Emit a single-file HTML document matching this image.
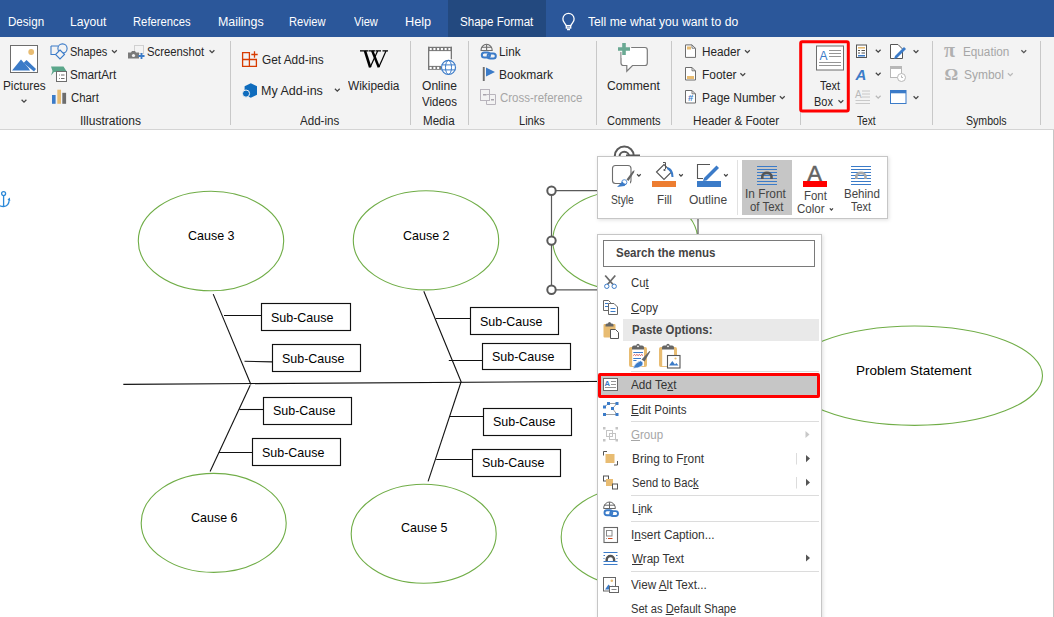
<!DOCTYPE html>
<html><head><meta charset="utf-8">
<style>
html,body{margin:0;padding:0;}
body{width:1054px;height:617px;overflow:hidden;position:relative;background:#fff;font-family:"Liberation Sans",sans-serif;}
.t{position:absolute;white-space:pre;transform-origin:0 0;}
.t u{text-decoration:underline;text-underline-offset:1px;text-decoration-thickness:1px;}
.a{position:absolute;}
.layer{position:absolute;left:0;top:0;}
.sep{position:absolute;width:1px;top:41px;height:84px;background:#c8c8c8;}
.msep{position:absolute;left:631px;width:188px;height:1px;background:#dcdcdc;}
</style></head>
<body>
<div class="a" style="left:0;top:0;width:1054px;height:37px;background:#2b579a;z-index:0"></div>
<div class="a" style="left:448px;top:0;width:98px;height:37px;background:#23497f;z-index:0"></div>
<div class="a" style="left:0;top:37px;width:1054px;height:92px;background:#f3f3f3;border-bottom:1px solid #d4d4d4;z-index:0"></div>
<div class="a" style="left:1053px;top:130px;width:1px;height:487px;background:#c6c6c6;z-index:0"></div>
<div class="sep" style="left:230px"></div>
<div class="sep" style="left:410px"></div>
<div class="sep" style="left:468px"></div>
<div class="sep" style="left:596px"></div>
<div class="sep" style="left:671px"></div>
<div class="sep" style="left:800px;top:112px;height:13px"></div>
<div class="sep" style="left:932px"></div>
<div class="sep" style="left:1040px"></div>
<svg class="layer" width="1054" height="617" style="z-index:1"><g fill="none" stroke="#fff" stroke-width="1.3"><path d="M566.3 25.6 L564.3 22.6 A5.6 5.6 0 1 1 572.7 22.6 L570.7 25.6 Z"/><rect x="566.3" y="25.6" width="4.4" height="2.4"/><path d="M567 29.6 H570"/></g><rect x="10.5" y="45.5" width="27" height="27" fill="#fff" stroke="#6d6d6d" stroke-width="1"/><path d="M12 70.5 L21 59.5 L28.5 68 L30 70.5 Z" fill="#3b7bc8"/><path d="M23.5 63 L26.5 60 L36 69 L34 71.5 Z" fill="#3b7bc8"/><circle cx="31.2" cy="52" r="2.9" fill="#e8bc72"/><path d="M21.6 99.8 L24 102.2 L26.4 99.8" fill="none" stroke="#444" stroke-width="1.25"/><g fill="none" stroke="#3b7bc8" stroke-width="1.1"><path d="M51 46 H58 M51 46 V54.5 H55"/><circle cx="62.5" cy="48.5" r="4.6"/><path d="M60 50 L64.5 54.5 L60 59 L55.5 54.5 Z" fill="#f3f3f3"/></g><path d="M112.0 50.3 L114.4 52.7 L116.80000000000001 50.3" fill="none" stroke="#444" stroke-width="1.25"/><path d="M51 66.5 H63.5 L67 72 H54 L51 75.5 L52.5 71 Z" fill="#5aa68a"/><rect x="56.5" y="71.5" width="10" height="10" fill="#fff" stroke="#6d6d6d"/><path d="M59 75 H59.8 M61 75 H64.5 M59 78.5 H59.8 M61 78.5 H64.5" stroke="#6d6d6d" stroke-width="1"/><rect x="52" y="95" width="3.6" height="8.8" fill="#3b7bc8"/><rect x="57.3" y="89.7" width="3.7" height="14.1" fill="#e8bc72"/><rect x="62.3" y="92.8" width="3.8" height="11" fill="#6d6d6d"/><rect x="134.5" y="45.5" width="9" height="8" fill="none" stroke="#9a9a9a" stroke-width="0.8" stroke-dasharray="1 1"/><path d="M128 52.5 H131 L132 51 H135 L136 52.5 H139 V58.5 H128 Z" fill="#7a7a7a"/><circle cx="133.5" cy="55.5" r="1.6" fill="#f3f3f3"/><path d="M141.5 53 V59 M138.5 56 H144.5" stroke="#3b7bc8" stroke-width="1.8"/><path d="M209.6 50.3 L212 52.7 L214.4 50.3" fill="none" stroke="#444" stroke-width="1.25"/><g fill="none" stroke="#d83b01" stroke-width="1.3"><path d="M242.6 52.6 H249.4 V66.4 H242.6 Z M242.6 59.5 H256.4 V66.4 H249.4"/><path d="M254.5 51.3 V57.7 M251.3 54.5 H257.7"/></g><path d="M250.8 83.2 L257 86.2 V94.8 L250.8 97.8 L244.6 94.8 V86.2 Z" fill="#0f6cbd"/><circle cx="246" cy="93.6" r="3.6" fill="#0f6cbd" stroke="#f3f3f3" stroke-width="1"/><path d="M334.90000000000003 88.8 L337.3 91.2 L339.7 88.8" fill="none" stroke="#444" stroke-width="1.25"/><g stroke="#000" fill="none"><path d="M365 50.8 L370.2 67.3" stroke-width="2.6"/><path d="M370.2 67.3 L377.6 51" stroke-width="1.2"/><path d="M372.2 50.8 L378.8 67.3" stroke-width="2.4"/><path d="M378.8 67.3 L386 51" stroke-width="1.2"/><path d="M360 50.8 H368 M368.5 50.8 H375.5 M376 50.8 H381 M382.5 50.8 H388" stroke-width="1.3"/></g><rect x="428.5" y="50" width="23" height="17" fill="#fff"/><rect x="428" y="46.8" width="24" height="4.3" fill="#777"/><rect x="429.60" y="48" width="2.1" height="2.1" fill="#fff"/><rect x="433.35" y="48" width="2.1" height="2.1" fill="#fff"/><rect x="437.10" y="48" width="2.1" height="2.1" fill="#fff"/><rect x="440.85" y="48" width="2.1" height="2.1" fill="#fff"/><rect x="444.60" y="48" width="2.1" height="2.1" fill="#fff"/><rect x="448.35" y="48" width="2.1" height="2.1" fill="#fff"/><rect x="428" y="46.8" width="1.3" height="23" fill="#777"/><rect x="450.7" y="46.8" width="1.3" height="12.5" fill="#777"/><rect x="428" y="65.9" width="13" height="3.9" fill="#777"/><rect x="429.60" y="66.9" width="2.1" height="2.1" fill="#fff"/><rect x="433.35" y="66.9" width="2.1" height="2.1" fill="#fff"/><rect x="437.10" y="66.9" width="2.1" height="2.1" fill="#fff"/><circle cx="448.5" cy="67.4" r="7" fill="#fff" stroke="#3b7bc8" stroke-width="1.2"/><g stroke="#3b7bc8" stroke-width="1" fill="none"><ellipse cx="448.5" cy="67.4" rx="3" ry="7"/><path d="M441.5 64.9 H455.5 M441.5 69.9 H455.5"/></g><g fill="none" stroke="#6d6d6d" stroke-width="1.1"><path d="M481 50.5 A5.6 6.2 0 0 1 492.2 50.5 Z"/><path d="M481.5 47.2 H491.7 M486.6 44.5 V50.5"/></g><g fill="none" stroke="#3b7bc8" stroke-width="2"><rect x="481.8" y="52.6" width="8.2" height="5" rx="2.5"/><rect x="487.6" y="53.6" width="8.2" height="5" rx="2.5"/></g><rect x="482.8" y="67" width="1.9" height="14" fill="#6d6d6d"/><path d="M486 67.5 L495 72 L486 76.5 Z" fill="#3b7bc8"/><g fill="none" stroke="#b8b4bc" stroke-width="1"><rect x="480.5" y="89.5" width="9" height="11"/><path d="M486.5 94.5 H495.5 V104.5 H486.5 V100.5"/></g><path d="M483 94.8 h3.5 M491 99.8 h3" stroke="#a9a5ad" stroke-width="1.4"/><path d="M621 52 V63 Q621 65.5 623.5 65.5 H626.8 V71.2 L632.5 65.5 H645 Q647.3 65.5 647.3 63 V50 Q647.3 47.5 645 47.5 H631.2" fill="#fff" stroke="#7a7a7a" stroke-width="1.2"/><rect x="621.7" y="48.2" width="9.8" height="9.8" fill="#fff"/><path d="M624 43 V55 M618 49 H630" stroke="#6aa993" stroke-width="3.6"/><path d="M685.5 44.9 H692 L695.5 48.4 V57.4 H685.5 Z" fill="#fff" stroke="#6d6d6d" stroke-linejoin="miter"/><path d="M692 44.9 V48.199999999999996 H695.5" fill="none" stroke="#6d6d6d" stroke-width="0.9"/><rect x="687" y="46.5" width="4" height="3" fill="#e8bc72"/><path d="M745.0 50.3 L747.4 52.7 L749.8 50.3" fill="none" stroke="#444" stroke-width="1.25"/><path d="M685.5 67.5 H692 L695.5 71 V80 H685.5 Z" fill="#fff" stroke="#6d6d6d" stroke-linejoin="miter"/><path d="M692 67.5 V70.8 H695.5" fill="none" stroke="#6d6d6d" stroke-width="0.9"/><rect x="687" y="76" width="7" height="3" fill="#e8bc72"/><path d="M740.4 73.3 L742.8 75.7 L745.1999999999999 73.3" fill="none" stroke="#444" stroke-width="1.25"/><path d="M685.5 90.5 H692 L695.5 94 V103 H685.5 Z" fill="#fff" stroke="#6d6d6d" stroke-linejoin="miter"/><path d="M692 90.5 V93.8 H695.5" fill="none" stroke="#6d6d6d" stroke-width="0.9"/><text x="690.6" y="101" font-size="9.5" font-family="Liberation Sans" text-anchor="middle" fill="#3b7bc8" font-weight="bold">#</text><path d="M779.9 96.3 L782.3 98.7 L784.6999999999999 96.3" fill="none" stroke="#444" stroke-width="1.25"/><rect x="816.5" y="46" width="27" height="24" fill="#fff" stroke="#6d6d6d"/><text x="819.5" y="60" font-size="12" font-family="Liberation Sans" fill="#3b7bc8">A</text><path d="M829 50.5 H841 M829 53.5 H841 M829 56.5 H841 M819 62.5 H841 M819 65.5 H841" stroke="#8a8a8a" stroke-width="0.9"/><path d="M838.5 100.3 L840.9 102.7 L843.3 100.3" fill="none" stroke="#444" stroke-width="1.25"/><rect x="800.7" y="41.7" width="47.6" height="69.3" rx="1.5" fill="none" stroke="#ff0000" stroke-width="3"/><rect x="856.5" y="45" width="10" height="12.5" fill="#fff" stroke="#555"/><rect x="858" y="47" width="7" height="1.6" fill="#e8bc72"/><path d="M858 50.5 h2 M858 53 h2 M861.5 50.5 h3.5 M861.5 53 h3.5" stroke="#555" stroke-width="1"/><rect x="858" y="55" width="7" height="1.5" fill="#3b7bc8"/><path d="M875.8000000000001 49.8 L878.2 52.2 L880.6 49.8" fill="none" stroke="#444" stroke-width="1.25"/><text x="855.5" y="79.5" font-size="15" font-style="italic" font-weight="bold" font-family="Liberation Sans" fill="#3b7bc8">A</text><path d="M875.8000000000001 72.8 L878.2 75.2 L880.6 72.8" fill="none" stroke="#444" stroke-width="1.25"/><text x="855" y="98" font-size="10" font-family="Liberation Sans" fill="#b8b8b8">A</text><path d="M862 91 H870 M862 94 H870 M862 97 H870 M855.5 100.5 H870 M855.5 103.5 H870" stroke="#c4c4c4" stroke-width="0.9"/><path d="M875.8000000000001 95.8 L878.2 98.2 L880.6 95.8" fill="none" stroke="#b8b8b8" stroke-width="1.25"/><path d="M890.5 44.5 H898 L902.5 49 V58.5 H890.5 Z" fill="#fff" stroke="#555"/><path d="M895 56 L904 47 L906 49 L897 58 L894 59 Z" fill="#3b7bc8"/><path d="M913.6 50.3 L916 52.7 L918.4 50.3" fill="none" stroke="#444" stroke-width="1.25"/><rect x="890.5" y="66.5" width="11" height="11" fill="#fff" stroke="#b8b8b8"/><rect x="890.5" y="66.5" width="11" height="2.5" fill="#b8b8b8"/><circle cx="901.5" cy="77.5" r="4" fill="#fff" stroke="#b8b8b8"/><path d="M901.5 75.5 V77.5 H903" stroke="#b8b8b8" fill="none"/><rect x="890.5" y="90.5" width="15.5" height="13" fill="#fff" stroke="#3b7bc8"/><rect x="890.5" y="90.5" width="15.5" height="2.8" fill="#3b7bc8"/><path d="M913.6 96.3 L916 98.7 L918.4 96.3" fill="none" stroke="#444" stroke-width="1.25"/><text x="944" y="56.8" font-size="20" font-family="Liberation Serif" font-weight="bold" fill="#b0b0b0">π</text><path d="M1021.4 50.3 L1023.8 52.7 L1026.2 50.3" fill="none" stroke="#555" stroke-width="1.25"/><text x="944.5" y="79.8" font-size="17" font-family="Liberation Serif" font-weight="bold" fill="#b0b0b0">Ω</text><path d="M1007.9 73.3 L1010.3 75.7 L1012.6999999999999 73.3" fill="none" stroke="#b8b8b8" stroke-width="1.25"/></svg>
<div class="a" style="left:0;top:0;z-index:1"><svg class="layer" width="1054" height="617" viewBox="0 0 1054 617"><line x1="123.3" y1="384.4" x2="790" y2="380.2" stroke="#111" stroke-width="1.1"/><line x1="213.2" y1="294.1" x2="250.9" y2="384.5" stroke="#111" stroke-width="1.1"/><line x1="423.8" y1="291.3" x2="461.3" y2="382.2" stroke="#111" stroke-width="1.1"/><line x1="250.2" y1="385.2" x2="210.1" y2="471.4" stroke="#111" stroke-width="1.1"/><line x1="461" y1="382" x2="428.1" y2="481.4" stroke="#111" stroke-width="1.1"/><line x1="224" y1="315.5" x2="261.5" y2="315.5" stroke="#111" stroke-width="1.1"/><line x1="244.5" y1="361.2" x2="272.5" y2="361.9" stroke="#111" stroke-width="1.1"/><line x1="239.4" y1="409.5" x2="263.5" y2="409.5" stroke="#111" stroke-width="1.1"/><line x1="218.9" y1="452.5" x2="252.5" y2="452.5" stroke="#111" stroke-width="1.1"/><line x1="435.6" y1="318.5" x2="470.5" y2="318.5" stroke="#111" stroke-width="1.1"/><line x1="448.8" y1="360.5" x2="482.5" y2="360.5" stroke="#111" stroke-width="1.1"/><line x1="449.4" y1="416.5" x2="483.5" y2="416.5" stroke="#111" stroke-width="1.1"/><line x1="436.2" y1="459.5" x2="472.5" y2="459.5" stroke="#111" stroke-width="1.1"/><rect x="261.5" y="303.5" width="89.0" height="27.0" fill="#fff" stroke="#111" stroke-width="1.15"/><rect x="272.5" y="344.5" width="88.0" height="27.0" fill="#fff" stroke="#111" stroke-width="1.15"/><rect x="263.5" y="397.5" width="88.0" height="27.0" fill="#fff" stroke="#111" stroke-width="1.15"/><rect x="252.5" y="438.5" width="88.0" height="27.0" fill="#fff" stroke="#111" stroke-width="1.15"/><rect x="470.5" y="307.5" width="88.0" height="27.0" fill="#fff" stroke="#111" stroke-width="1.15"/><rect x="482.5" y="343.5" width="88.0" height="26.0" fill="#fff" stroke="#111" stroke-width="1.15"/><rect x="483.5" y="408.5" width="88.0" height="27.0" fill="#fff" stroke="#111" stroke-width="1.15"/><rect x="472.5" y="449.5" width="88.0" height="27.0" fill="#fff" stroke="#111" stroke-width="1.15"/><ellipse cx="211" cy="241" rx="72.7" ry="49.8" fill="#fff" stroke="#70ad47" stroke-width="1.1"/><ellipse cx="426" cy="240.3" rx="72.7" ry="49.6" fill="#fff" stroke="#70ad47" stroke-width="1.1"/><ellipse cx="213.7" cy="522.9" rx="72.5" ry="49.5" fill="#fff" stroke="#70ad47" stroke-width="1.1"/><ellipse cx="423.7" cy="533.7" rx="72.5" ry="49.5" fill="#fff" stroke="#70ad47" stroke-width="1.1"/><ellipse cx="633.7" cy="537" rx="72.5" ry="49.5" fill="#fff" stroke="#70ad47" stroke-width="1.1"/><ellipse cx="625.3" cy="240.6" rx="72.5" ry="49.8" fill="#fff" stroke="#70ad47" stroke-width="1.1"/><ellipse cx="914.5" cy="375.7" rx="128" ry="49.7" fill="#fff" stroke="#70ad47" stroke-width="1.1"/><path d="M551.5 190.7 H698 V289.8 H551.5 Z" fill="none" stroke="#5a5a5a" stroke-width="1.2"/><circle cx="551.5" cy="190.7" r="4.2" fill="#fff" stroke="#5a5a5a" stroke-width="2"/><circle cx="551.5" cy="240.6" r="4.2" fill="#fff" stroke="#5a5a5a" stroke-width="2"/><circle cx="551.5" cy="289.8" r="4.2" fill="#fff" stroke="#5a5a5a" stroke-width="2"/><circle cx="624.3" cy="156" r="9.5" fill="none" stroke="#5a5a5a" stroke-width="2"/><circle cx="624.3" cy="156.5" r="4.8" fill="none" stroke="#5a5a5a" stroke-width="2"/><path d="M626 155.5 H640" stroke="#5a5a5a" stroke-width="2"/><g stroke="#2b88d8" stroke-width="1.3" fill="none"><circle cx="3.6" cy="193.6" r="2"/><path d="M3.6 195.6 V206"/><path d="M-4 202 Q-2 206.5 3.6 206.5 Q9 206.5 9.3 199"/></g><path d="M7.5 199.5 L9.8 197.5 L10.3 201 Z" fill="#2b88d8"/></svg></div>
<!-- toolbar -->
<div class="a" style="left:597px;top:156px;width:289px;height:61px;background:#fff;border:1px solid #c6c6c6;box-shadow:1px 1px 4px rgba(0,0,0,0.13);z-index:5"></div>
<div class="a" style="left:737px;top:160px;width:1px;height:55px;background:#e1e1e1;z-index:5"></div>
<div class="a" style="left:742px;top:160px;width:50px;height:55px;background:#c6c6c6;z-index:5"></div>
<!-- menu -->
<div class="a" style="left:597px;top:234px;width:223px;height:400px;background:#fff;border:1px solid #c6c6c6;box-shadow:1px 1px 4px rgba(0,0,0,0.13);z-index:5"></div>
<div class="a" style="left:603px;top:240px;width:210px;height:25px;border:1px solid #7a7a7a;z-index:5"></div>
<div class="a" style="left:623px;top:319px;width:196px;height:22px;background:#e9e9e9;z-index:5"></div>
<div class="a" style="left:598px;top:373px;width:216px;height:19px;background:#c6c6c6;border:3px solid #ff0000;border-radius:2px;z-index:5"></div>
<div class="msep" style="top:371px;z-index:5"></div>
<div class="msep" style="top:421px;z-index:5"></div>
<div class="msep" style="top:495px;z-index:5"></div>
<div class="msep" style="top:521px;z-index:5"></div>
<div class="msep" style="top:571px;z-index:5"></div>
<svg class="layer" width="1054" height="617" style="z-index:6"><rect x="612.5" y="165.5" width="18.5" height="18" rx="3" fill="none" stroke="#6d6d6d" stroke-width="1.1"/><rect x="621" y="178" width="9" height="9" fill="#fff"/><path d="M626.5 179.5 L632.5 171.5 L634.5 170 L634 172.5 L628.5 181 Z" fill="#666"/><circle cx="624.3" cy="182.3" r="2.6" fill="#fff" stroke="#4a86cf" stroke-width="0.9"/><path d="M617 187 L622.5 181.5 Q624 184.5 626.5 183.5 L624.5 186 Z" fill="#3b7bc8"/><path d="M637.1 174.29999999999998 L638.9 176.1 L640.6999999999999 174.29999999999998" fill="none" stroke="#444" stroke-width="1.25"/><path d="M656.5 172 L664 164.5 L671.5 172 L664 179.5 Z" fill="#fff" stroke="#555" stroke-width="1.1"/><path d="M663 162.5 H665.5 V169" fill="none" stroke="#555"/><circle cx="664.5" cy="170" r="1.1" fill="#555"/><path d="M667.5 167 Q673.5 168.5 673.5 177 L671.5 177 Q671.5 171.5 667 169 Z" fill="#3b7bc8"/><rect x="652" y="181" width="24" height="6" fill="#ed7d31"/><path d="M679.2 174.29999999999998 L681 176.1 L682.8 174.29999999999998" fill="none" stroke="#444" stroke-width="1.25"/><path d="M710 164.5 H697.5 V178.5 H703" fill="none" stroke="#555" stroke-width="1.1"/><path d="M704 178 L716.5 165.5 L719 168 L706.5 180.5 L703 181 Z" fill="#3b7bc8"/><rect x="697" y="181" width="24" height="6" fill="#3b7bc8"/><path d="M724.1 174.29999999999998 L725.9 176.1 L727.6999999999999 174.29999999999998" fill="none" stroke="#444" stroke-width="1.25"/><path d="M757 166.5 H777" stroke="#3b7bc8" stroke-width="1"/><path d="M757 169.5 H777" stroke="#3b7bc8" stroke-width="1"/><path d="M757 172.5 H777" stroke="#3b7bc8" stroke-width="1"/><path d="M757 175.5 H777" stroke="#3b7bc8" stroke-width="1"/><path d="M757 178.5 H777" stroke="#3b7bc8" stroke-width="1"/><path d="M757 181.5 H777" stroke="#3b7bc8" stroke-width="1"/><path d="M757 184.5 H777" stroke="#3b7bc8" stroke-width="1"/><path d="M762.3 179 V176.5 A4.6 3.6 0 0 1 771.5 176.5 V179" fill="none" stroke="#555" stroke-width="2.6"/><text x="814.7" y="181.3" font-size="22" font-family="Liberation Sans" text-anchor="middle" fill="#636363" stroke="#636363" stroke-width="0.5">A</text><rect x="803" y="181" width="24" height="6" fill="#ff0000"/><path d="M829.8 208.39999999999998 L831.4 210.0 L833.0 208.39999999999998" fill="none" stroke="#444" stroke-width="1.25"/><path d="M851 166.5 H871" stroke="#3b7bc8" stroke-width="1"/><path d="M851 169.5 H871" stroke="#3b7bc8" stroke-width="1"/><path d="M851 172.5 H871" stroke="#3b7bc8" stroke-width="1"/><path d="M851 175.5 H871" stroke="#3b7bc8" stroke-width="1"/><path d="M851 178.5 H871" stroke="#3b7bc8" stroke-width="1"/><path d="M851 181.5 H871" stroke="#3b7bc8" stroke-width="1"/><path d="M851 184.5 H871" stroke="#3b7bc8" stroke-width="1"/><path d="M856.3 179 V176.5 A4.6 3.6 0 0 1 865.5 176.5 V179" fill="none" stroke="#aaa" stroke-width="2.6"/><path d="M605.2 275.5 L613 284.5 M615.3 275.5 L607.5 284.5" stroke="#6a6a6a" stroke-width="1.8"/><circle cx="606.8" cy="286.3" r="2.2" fill="#fff" stroke="#3b7bc8" stroke-width="1"/><circle cx="614.2" cy="286.3" r="2.2" fill="#fff" stroke="#3b7bc8" stroke-width="1"/><path d="M603.5 300.5 H608.5 L610.5 302.5 V310.5 H603.5 Z" fill="#fff" stroke="#666"/><path d="M605 303.5 h3 M605 306.5 h3" stroke="#3b7bc8" stroke-width="1"/><path d="M608.5 303.5 H614 L617.5 307 V314.5 H608.5 Z" fill="#fff" stroke="#666"/><path d="M610.5 308.5 H615.5 M610.5 311.5 H615.5" stroke="#3b7bc8" stroke-width="1"/><rect x="603.5" y="324" width="12" height="13.5" rx="1" fill="#e8bc72"/><path d="M605.5 326.5 V325 Q605.5 323.5 607 323.5 H608 A1.5 1.5 0 0 1 611 323.5 H612 Q613.5 323.5 613.5 325 V326.5 Z" fill="#666"/><path d="M610.5 329.5 H615.5 L618.5 332.5 V338.5 H610.5 Z" fill="#fff" stroke="#555" stroke-linejoin="miter"/><rect x="629" y="347" width="18" height="20" rx="2" fill="#e8bc72"/><rect x="632.2" y="348.3" width="11.8" height="17.8" fill="#fff"/><path d="M632 349.5 V347.5 Q632 345.5 634 345.5 H636.3 A1.7 1.7 0 0 1 639.7 345.5 H642 Q644 345.5 644 347.5 V349.5 Z" fill="#666"/><circle cx="638" cy="346.3" r="0.9" fill="#fff"/><path d="M633.3 352.5 H643 M633.3 358.5 H641 M633.3 360.5 H636.5" stroke="#3b7bc8" stroke-width="1"/><path d="M633.3 355.5 l1.2 -1 l1.2 1 l1.2 -1 l1.2 1 l1.2 -1 l1.2 1 l1.2 -1 l1.2 1" fill="none" stroke="#d04040" stroke-width="0.9"/><path d="M641.5 359.5 L649.5 351 L650.3 351.5 L644.5 361.5 Z" fill="#666"/><path d="M633 368.2 Q635 362.5 640.5 360.8 Q644.5 362 642 366 Q638 368.5 633 368.2 Z" fill="#3b7bc8" stroke="#fff" stroke-width="0.6"/><rect x="659" y="347" width="18" height="20" rx="2" fill="#e8bc72"/><rect x="662.2" y="348.3" width="11.8" height="17.8" fill="#fff"/><path d="M662 349.5 V347.5 Q662 345.5 664 345.5 H666.3 A1.7 1.7 0 0 1 669.7 345.5 H672 Q674 345.5 674 347.5 V349.5 Z" fill="#666"/><circle cx="668" cy="346.3" r="0.9" fill="#fff"/><rect x="667.5" y="355.5" width="12.5" height="12.5" fill="#fff" stroke="#555" stroke-width="1.1"/><path d="M669 365.5 L672.3 361 L675 364.5 L676.3 363 L678.5 365.5 Z" fill="#3b7bc8"/><circle cx="675.5" cy="358.5" r="1.1" fill="#e8bc72"/><rect x="603.5" y="378.5" width="14" height="12" fill="#fff" stroke="#6a6a6a"/><text x="604.6" y="385.6" font-size="7.5" font-weight="bold" font-family="Liberation Sans" fill="#3b7bc8">A</text><path d="M611 381.5 h5 M611 384.5 h5 M605 387.5 h11" stroke="#888" stroke-width="0.9"/><path d="M604.5 407 L608.5 403.5 M608.5 403.5 H617 L612.5 408.5 L617 414.5 M604.5 414.5 H617" stroke="#8a8a8a" stroke-width="0.8" fill="none"/><g fill="#3b7bc8"><rect x="603" y="405.5" width="3" height="3"/><rect x="607" y="402" width="3" height="3"/><rect x="615.5" y="402" width="3" height="3"/><rect x="611" y="407" width="3" height="3"/><rect x="603" y="413" width="3" height="3"/><rect x="615.5" y="413" width="3" height="3"/></g><g fill="#c4c4c4"><rect x="603" y="427" width="2.5" height="2.5"/><rect x="615.5" y="427" width="2.5" height="2.5"/><rect x="603" y="439" width="2.5" height="2.5"/><rect x="615.5" y="439" width="2.5" height="2.5"/></g><rect x="606.5" y="430.5" width="6" height="6" fill="none" stroke="#c4c4c4"/><rect x="609.5" y="433.5" width="6" height="6" fill="none" stroke="#c4c4c4"/><path d="M805.5 431 L809.5 434.5 L805.5 438 Z" fill="#c8c8c8"/><rect x="605.5" y="454" width="9" height="9" fill="#e8bc72"/><path d="M603.5 455.5 V451.5 H607 M617.5 461 V465 H614" fill="none" stroke="#555" stroke-width="1"/><path d="M806 455 L810 458.6 L806 462.2 Z" fill="#555"/><rect x="796" y="453" width="1" height="11.5" fill="#dcdcdc"/><rect x="603.5" y="476" width="5" height="5" fill="#fff" stroke="#555"/><rect x="606" y="479" width="7" height="7" fill="#e8bc72"/><rect x="612.5" y="484" width="5" height="5" fill="#fff" stroke="#555"/><path d="M806 478.8 L810 482.4 L806 486 Z" fill="#555"/><rect x="796" y="477" width="1" height="11.5" fill="#dcdcdc"/><g fill="none" stroke="#666" stroke-width="1"><path d="M603.6 508.5 A5.9 6.5 0 0 1 615.4 508.5 Z"/><path d="M604 505.2 H615 M609.5 502.2 V508.5"/></g><g fill="none" stroke="#3b7bc8" stroke-width="1.9"><rect x="604.5" y="510.3" width="7.8" height="4.9" rx="2.45"/><rect x="610.2" y="511.1" width="7.8" height="4.9" rx="2.45"/></g><rect x="604" y="527.5" width="13.5" height="15" fill="#fff" stroke="#666" stroke-width="1.1"/><rect x="606.5" y="530.5" width="5.5" height="5.5" fill="none" stroke="#888"/><path d="M608 538.5 h4.5" stroke="#d04a20" stroke-width="1"/><path d="M606 538.5 h1" stroke="#999" stroke-width="1"/><path d="M603.5 552.5 H617.5 M603.5 561.5 H617.5 M603.5 564.5 H617.5" stroke="#3b7bc8" stroke-width="1"/><path d="M603.5 555.5 H605 M616 555.5 H617.5 M603.5 558.5 H604.5 M616.5 558.5 H617.5" stroke="#3b7bc8" stroke-width="1"/><path d="M606.7 561 V559.5 A3.7 3.5 0 0 1 614.1 559.5 V561" fill="none" stroke="#555" stroke-width="2.4"/><path d="M806 554.5 L810 558 L806 561.5 Z" fill="#555"/><rect x="603.5" y="577.5" width="12" height="13.5" fill="#fff" stroke="#666"/><path d="M605 589.5 L608.5 584.5 L611 587 L612.5 585.5 L615 589.5 Z" fill="#3b7bc8"/><circle cx="611.8" cy="580.8" r="1.3" fill="#e8bc72"/><rect x="609.5" y="586.5" width="9" height="6" fill="#fff" stroke="#666"/><path d="M611.5 589.5 h5" stroke="#888" stroke-width="1"/></svg>
<div class="t" style="left:7.57px;top:15.62px;font-size:12.5px;line-height:12.5px;color:#ffffff;font-weight:normal;z-index:1;transform:scaleX(0.9273)">Design</div>
<div class="t" style="left:70.03px;top:15.62px;font-size:12.5px;line-height:12.5px;color:#ffffff;font-weight:normal;z-index:1;transform:scaleX(0.9688)">Layout</div>
<div class="t" style="left:133.30px;top:15.62px;font-size:12.5px;line-height:12.5px;color:#ffffff;font-weight:normal;z-index:1;transform:scaleX(0.8999)">References</div>
<div class="t" style="left:217.60px;top:15.62px;font-size:12.5px;line-height:12.5px;color:#ffffff;font-weight:normal;z-index:1;transform:scaleX(0.9955)">Mailings</div>
<div class="t" style="left:289.41px;top:15.62px;font-size:12.5px;line-height:12.5px;color:#ffffff;font-weight:normal;z-index:1;transform:scaleX(0.8912)">Review</div>
<div class="t" style="left:354.00px;top:15.62px;font-size:12.5px;line-height:12.5px;color:#ffffff;font-weight:normal;z-index:1;transform:scaleX(0.8872)">View</div>
<div class="t" style="left:404.68px;top:15.62px;font-size:12.5px;line-height:12.5px;color:#ffffff;font-weight:normal;z-index:1;transform:scaleX(1.0179)">Help</div>
<div class="t" style="left:459.50px;top:15.62px;font-size:12.5px;line-height:12.5px;color:#ffffff;font-weight:normal;z-index:1;transform:scaleX(0.9256)">Shape Format</div>
<div class="t" style="left:588.30px;top:15.62px;font-size:12.5px;line-height:12.5px;color:#ffffff;font-weight:normal;z-index:1;transform:scaleX(0.9735)">Tell me what you want to do</div>
<div class="t" style="left:2.66px;top:80.02px;font-size:12.5px;line-height:12.5px;color:#262626;font-weight:normal;z-index:1;transform:scaleX(0.9430)">Pictures</div>
<div class="t" style="left:70.00px;top:46.32px;font-size:12.5px;line-height:12.5px;color:#262626;font-weight:normal;z-index:1;transform:scaleX(0.8803)">Shapes</div>
<div class="t" style="left:70.00px;top:68.62px;font-size:12.5px;line-height:12.5px;color:#262626;font-weight:normal;z-index:1;transform:scaleX(0.9370)">SmartArt</div>
<div class="t" style="left:70.50px;top:91.72px;font-size:12.5px;line-height:12.5px;color:#262626;font-weight:normal;z-index:1;transform:scaleX(0.9102)">Chart</div>
<div class="t" style="left:80.44px;top:114.92px;font-size:12.5px;line-height:12.5px;color:#262626;font-weight:normal;z-index:1;transform:scaleX(0.9634)">Illustrations</div>
<div class="t" style="left:147.30px;top:46.32px;font-size:12.5px;line-height:12.5px;color:#262626;font-weight:normal;z-index:1;transform:scaleX(0.9034)">Screenshot</div>
<div class="t" style="left:261.50px;top:54.32px;font-size:12.5px;line-height:12.5px;color:#262626;font-weight:normal;z-index:1;transform:scaleX(0.9460)">Get Add-ins</div>
<div class="t" style="left:260.50px;top:85.42px;font-size:12.5px;line-height:12.5px;color:#262626;font-weight:normal;z-index:1;transform:scaleX(1.0005)">My Add-ins</div>
<div class="t" style="left:348.00px;top:80.02px;font-size:12.5px;line-height:12.5px;color:#262626;font-weight:normal;z-index:1;transform:scaleX(0.9496)">Wikipedia</div>
<div class="t" style="left:300.00px;top:115.12px;font-size:12.5px;line-height:12.5px;color:#262626;font-weight:normal;z-index:1;transform:scaleX(0.9256)">Add-ins</div>
<div class="t" style="left:422.30px;top:80.02px;font-size:12.5px;line-height:12.5px;color:#262626;font-weight:normal;z-index:1;transform:scaleX(0.9646)">Online</div>
<div class="t" style="left:422.30px;top:96.32px;font-size:12.5px;line-height:12.5px;color:#262626;font-weight:normal;z-index:1;transform:scaleX(0.9193)">Videos</div>
<div class="t" style="left:422.57px;top:115.12px;font-size:12.5px;line-height:12.5px;color:#262626;font-weight:normal;z-index:1;transform:scaleX(0.9277)">Media</div>
<div class="t" style="left:498.66px;top:45.82px;font-size:12.5px;line-height:12.5px;color:#262626;font-weight:normal;z-index:1;transform:scaleX(0.9391)">Link</div>
<div class="t" style="left:498.64px;top:69.22px;font-size:12.5px;line-height:12.5px;color:#262626;font-weight:normal;z-index:1;transform:scaleX(0.9586)">Bookmark</div>
<div class="t" style="left:499.60px;top:92.12px;font-size:12.5px;line-height:12.5px;color:#a6a6a6;font-weight:normal;z-index:1;transform:scaleX(0.9190)">Cross-reference</div>
<div class="t" style="left:518.72px;top:115.12px;font-size:12.5px;line-height:12.5px;color:#262626;font-weight:normal;z-index:1;transform:scaleX(0.8843)">Links</div>
<div class="t" style="left:607.40px;top:80.12px;font-size:12.5px;line-height:12.5px;color:#262626;font-weight:normal;z-index:1;transform:scaleX(0.9743)">Comment</div>
<div class="t" style="left:607.40px;top:115.02px;font-size:12.5px;line-height:12.5px;color:#262626;font-weight:normal;z-index:1;transform:scaleX(0.8857)">Comments</div>
<div class="t" style="left:701.66px;top:46.32px;font-size:12.5px;line-height:12.5px;color:#262626;font-weight:normal;z-index:1;transform:scaleX(0.9389)">Header</div>
<div class="t" style="left:701.64px;top:69.12px;font-size:12.5px;line-height:12.5px;color:#262626;font-weight:normal;z-index:1;transform:scaleX(0.9553)">Footer</div>
<div class="t" style="left:701.64px;top:92.02px;font-size:12.5px;line-height:12.5px;color:#262626;font-weight:normal;z-index:1;transform:scaleX(0.9571)">Page Number</div>
<div class="t" style="left:692.67px;top:115.02px;font-size:12.5px;line-height:12.5px;color:#262626;font-weight:normal;z-index:1;transform:scaleX(0.9327)">Header &amp; Footer</div>
<div class="t" style="left:819.60px;top:80.02px;font-size:12.5px;line-height:12.5px;color:#262626;font-weight:normal;z-index:1;transform:scaleX(0.8699)">Text</div>
<div class="t" style="left:813.52px;top:95.52px;font-size:12.5px;line-height:12.5px;color:#262626;font-weight:normal;z-index:1;transform:scaleX(0.8784)">Box</div>
<div class="t" style="left:856.50px;top:114.72px;font-size:12.5px;line-height:12.5px;color:#262626;font-weight:normal;z-index:1;transform:scaleX(0.8144)">Text</div>
<div class="t" style="left:962.66px;top:46.22px;font-size:12.5px;line-height:12.5px;color:#a6a6a6;font-weight:normal;z-index:1;transform:scaleX(0.9381)">Equation</div>
<div class="t" style="left:963.60px;top:68.62px;font-size:12.5px;line-height:12.5px;color:#a6a6a6;font-weight:normal;z-index:1;transform:scaleX(0.9583)">Symbol</div>
<div class="t" style="left:965.80px;top:114.72px;font-size:12.5px;line-height:12.5px;color:#262626;font-weight:normal;z-index:1;transform:scaleX(0.8473)">Symbols</div>
<div class="t" style="left:187.90px;top:229.27px;font-size:13.5px;line-height:13.5px;color:#000000;font-weight:normal;z-index:2;transform:scaleX(0.9262)">Cause 3</div>
<div class="t" style="left:403.10px;top:228.77px;font-size:13.5px;line-height:13.5px;color:#000000;font-weight:normal;z-index:2;transform:scaleX(0.9262)">Cause 2</div>
<div class="t" style="left:190.90px;top:511.07px;font-size:13.5px;line-height:13.5px;color:#000000;font-weight:normal;z-index:2;transform:scaleX(0.9262)">Cause 6</div>
<div class="t" style="left:400.90px;top:521.17px;font-size:13.5px;line-height:13.5px;color:#000000;font-weight:normal;z-index:2;transform:scaleX(0.9262)">Cause 5</div>
<div class="t" style="left:856.10px;top:363.57px;font-size:13.5px;line-height:13.5px;color:#000000;font-weight:normal;z-index:2;transform:scaleX(0.9991)">Problem Statement</div>
<div class="t" style="left:270.90px;top:310.67px;font-size:13.5px;line-height:13.5px;color:#000000;font-weight:normal;z-index:2;transform:scaleX(0.9234)">Sub-Cause</div>
<div class="t" style="left:282.10px;top:352.07px;font-size:13.5px;line-height:13.5px;color:#000000;font-weight:normal;z-index:2;transform:scaleX(0.9234)">Sub-Cause</div>
<div class="t" style="left:273.00px;top:404.17px;font-size:13.5px;line-height:13.5px;color:#000000;font-weight:normal;z-index:2;transform:scaleX(0.9234)">Sub-Cause</div>
<div class="t" style="left:262.20px;top:445.77px;font-size:13.5px;line-height:13.5px;color:#000000;font-weight:normal;z-index:2;transform:scaleX(0.9234)">Sub-Cause</div>
<div class="t" style="left:479.80px;top:315.07px;font-size:13.5px;line-height:13.5px;color:#000000;font-weight:normal;z-index:2;transform:scaleX(0.9234)">Sub-Cause</div>
<div class="t" style="left:492.30px;top:349.67px;font-size:13.5px;line-height:13.5px;color:#000000;font-weight:normal;z-index:2;transform:scaleX(0.9234)">Sub-Cause</div>
<div class="t" style="left:493.00px;top:414.97px;font-size:13.5px;line-height:13.5px;color:#000000;font-weight:normal;z-index:2;transform:scaleX(0.9234)">Sub-Cause</div>
<div class="t" style="left:482.20px;top:456.27px;font-size:13.5px;line-height:13.5px;color:#000000;font-weight:normal;z-index:2;transform:scaleX(0.9234)">Sub-Cause</div>
<div class="t" style="left:610.50px;top:193.94px;font-size:12px;line-height:12px;color:#444444;font-weight:normal;z-index:6;transform:scaleX(0.8554)">Style</div>
<div class="t" style="left:656.50px;top:193.94px;font-size:12px;line-height:12px;color:#444444;font-weight:normal;z-index:6;transform:scaleX(0.9753)">Fill</div>
<div class="t" style="left:689.40px;top:193.94px;font-size:12px;line-height:12px;color:#444444;font-weight:normal;z-index:6;transform:scaleX(1.0014)">Outline</div>
<div class="t" style="left:745.41px;top:187.94px;font-size:12px;line-height:12px;color:#444444;font-weight:normal;z-index:6;transform:scaleX(0.9874)">In Front</div>
<div class="t" style="left:749.70px;top:200.84px;font-size:12px;line-height:12px;color:#444444;font-weight:normal;z-index:6;transform:scaleX(0.9496)">of Text</div>
<div class="t" style="left:804.40px;top:189.94px;font-size:12px;line-height:12px;color:#444444;font-weight:normal;z-index:6;transform:scaleX(0.9523)">Font</div>
<div class="t" style="left:796.50px;top:202.64px;font-size:12px;line-height:12px;color:#444444;font-weight:normal;z-index:6;transform:scaleX(0.9624)">Color</div>
<div class="t" style="left:843.50px;top:187.94px;font-size:12px;line-height:12px;color:#444444;font-weight:normal;z-index:6;transform:scaleX(0.9621)">Behind</div>
<div class="t" style="left:851.40px;top:200.84px;font-size:12px;line-height:12px;color:#444444;font-weight:normal;z-index:6;transform:scaleX(0.9041)">Text</div>
<div class="t" style="left:616.20px;top:246.54px;font-size:12px;line-height:12px;color:#444444;font-weight:bold;z-index:6;transform:scaleX(0.9615)">Search the menus</div>
<div class="t" style="left:631.40px;top:277.04px;font-size:12px;line-height:12px;color:#333333;font-weight:normal;z-index:6;transform:scaleX(0.9462)">Cu<u>t</u></div>
<div class="t" style="left:631.40px;top:301.64px;font-size:12px;line-height:12px;color:#333333;font-weight:normal;z-index:6;transform:scaleX(0.9602)"><u>C</u>opy</div>
<div class="t" style="left:632.10px;top:323.94px;font-size:12px;line-height:12px;color:#444444;font-weight:bold;z-index:6;transform:scaleX(0.9500)">Paste Options:</div>
<div class="t" style="left:631.40px;top:379.34px;font-size:12px;line-height:12px;color:#333333;font-weight:normal;z-index:6;transform:scaleX(0.9776)">Add Te<u>x</u>t</div>
<div class="t" style="left:631.40px;top:403.74px;font-size:12px;line-height:12px;color:#333333;font-weight:normal;z-index:6;transform:scaleX(0.9675)"><u>E</u>dit Points</div>
<div class="t" style="left:631.40px;top:428.74px;font-size:12px;line-height:12px;color:#a6a6a6;font-weight:normal;z-index:6;transform:scaleX(0.9621)"><u>G</u>roup</div>
<div class="t" style="left:631.60px;top:453.04px;font-size:12px;line-height:12px;color:#333333;font-weight:normal;z-index:6;transform:scaleX(0.9910)">Bring to F<u>r</u>ont</div>
<div class="t" style="left:631.60px;top:476.84px;font-size:12px;line-height:12px;color:#333333;font-weight:normal;z-index:6;transform:scaleX(0.9326)">Send to Bac<u>k</u></div>
<div class="t" style="left:631.60px;top:503.24px;font-size:12px;line-height:12px;color:#333333;font-weight:normal;z-index:6;transform:scaleX(0.9255)">L<u>i</u>nk</div>
<div class="t" style="left:630.61px;top:529.04px;font-size:12px;line-height:12px;color:#333333;font-weight:normal;z-index:6;transform:scaleX(0.9859)">I<u>n</u>sert Caption...</div>
<div class="t" style="left:631.60px;top:552.84px;font-size:12px;line-height:12px;color:#333333;font-weight:normal;z-index:6;transform:scaleX(0.9695)"><u>W</u>rap Text</div>
<div class="t" style="left:631.00px;top:578.64px;font-size:12px;line-height:12px;color:#333333;font-weight:normal;z-index:6;transform:scaleX(0.9752)">View <u>A</u>lt Text...</div>
<div class="t" style="left:631.00px;top:603.14px;font-size:12px;line-height:12px;color:#333333;font-weight:normal;z-index:6;transform:scaleX(0.9276)">Set as <u>D</u>efault Shape</div>
</body></html>
